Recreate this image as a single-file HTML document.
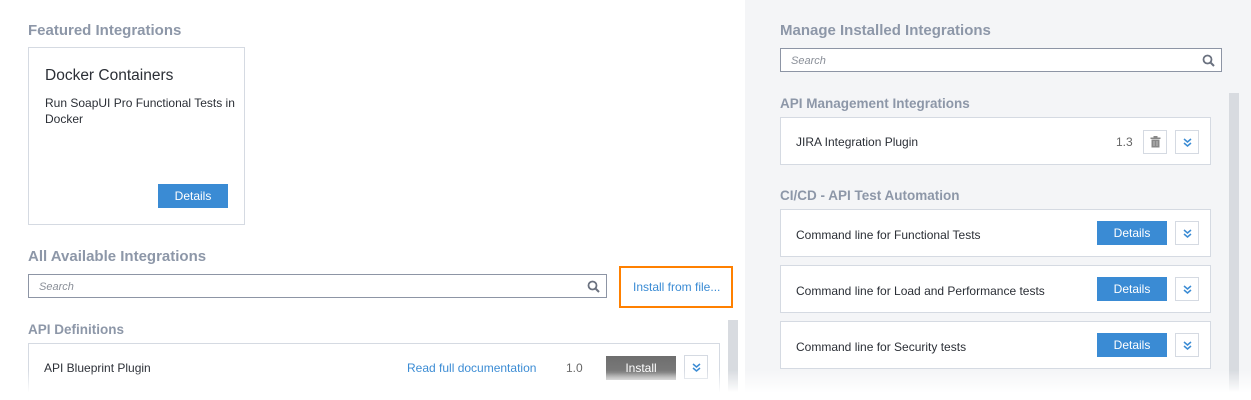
<!DOCTYPE html>
<html><head><meta charset="utf-8"><style>
*{box-sizing:border-box;margin:0;padding:0}
body{width:1251px;height:400px;overflow:hidden;background:#fff;font-family:"Liberation Sans",sans-serif;position:relative;color:#2b2f36}
.a{position:absolute}
.h{position:absolute;color:#8d97a8;font-weight:bold;white-space:nowrap}
.h1{font-size:15px}
.h2{font-size:13.5px}
.card{position:absolute;background:#fff;border:1px solid #d5dae2}
.t{position:absolute;font-size:12px;white-space:nowrap;color:#2b2f36}
.btn{position:absolute;background:#3a8bd4;color:#fff;font-size:12px;text-align:center;line-height:25px;width:70px;height:24px}
.chev{position:absolute;width:24px;height:24px;border:1px solid #d5dae2;background:#fff}
.chev svg{position:absolute;left:6px;top:6px}
.search{position:absolute;height:24px;border:1px solid #8d95a5;background:#fff}
.search span{position:absolute;left:10px;top:6px;font-size:11px;font-style:italic;color:#8a8f98}
.search svg{position:absolute;right:6px;top:5px}
</style></head><body>
<div class="a" style="left:745px;top:0;width:506px;height:400px;background:#f4f5f7"></div>

<div class="h h1" style="left:28px;top:22px">Featured Integrations</div>
<div class="card" style="left:28px;top:47px;width:217px;height:178px"></div>
<div class="t" style="left:45px;top:67px;font-size:15.5px">Docker Containers</div>
<div class="t" style="left:45px;top:95px;line-height:16px">Run SoapUI Pro Functional Tests in<br>Docker</div>
<div class="btn" style="left:158px;top:184px">Details</div>

<div class="h h1" style="left:28px;top:248px">All Available Integrations</div>
<div class="search" style="left:28px;top:274px;width:579px"><span>Search</span>
<svg width="13" height="13" viewBox="0 0 13 13"><circle cx="5.5" cy="5.5" r="4" fill="none" stroke="#6b7280" stroke-width="1.8"/><path d="M8.5 8.5L12 12" stroke="#6b7280" stroke-width="2"/></svg></div>
<div class="a" style="left:619px;top:266px;width:114px;height:42px;border:2px solid #ff8000"></div>
<div class="t" style="left:633px;top:280px;color:#3a8bd4">Install from file...</div>

<div class="h h2" style="left:28px;top:322px">API Definitions</div>
<div class="card" style="left:28px;top:343px;width:692px;height:50px"></div>
<div class="t" style="left:44px;top:361px">API Blueprint Plugin</div>
<div class="t" style="left:407px;top:361px;color:#3a8bd4">Read full documentation</div>
<div class="t" style="left:566px;top:361px;color:#666">1.0</div>
<div class="btn" style="left:606px;top:356px;background:linear-gradient(#6e6e6e,#7a7a7a 70%,#bbb)">Install</div>
<div class="chev" style="left:684px;top:355px"><svg width="11" height="11" viewBox="0 0 11 11"><path d="M2 2l3.5 3 3.5-3M2 6l3.5 3 3.5-3" fill="none" stroke="#3a8bd4" stroke-width="1.5"/></svg></div>
<div class="a" style="left:728px;top:320px;width:10px;height:80px;background:#d8dbe0"></div>

<div class="h h1" style="left:780px;top:22px">Manage Installed Integrations</div>
<div class="search" style="left:780px;top:48px;width:442px"><span>Search</span>
<svg width="13" height="13" viewBox="0 0 13 13"><circle cx="5.5" cy="5.5" r="4" fill="none" stroke="#6b7280" stroke-width="1.8"/><path d="M8.5 8.5L12 12" stroke="#6b7280" stroke-width="2"/></svg></div>
<div class="a" style="left:1229px;top:93px;width:10px;height:307px;background:#d8dbe0"></div>

<div class="h h2" style="left:780px;top:96px">API Management Integrations</div>
<div class="card" style="left:780px;top:117px;width:431px;height:48px"></div>
<div class="t" style="left:796px;top:135px">JIRA Integration Plugin</div>
<div class="t" style="left:1116px;top:135px;color:#666">1.3</div>
<div class="chev" style="left:1143px;top:130px"><svg width="11" height="12" viewBox="0 0 11 12" style="left:6px;top:5px"><rect x="3.5" y="0" width="4" height="2" fill="#888"/><rect x="0.5" y="1.5" width="10" height="1.5" fill="#888"/><rect x="1.5" y="3.5" width="8" height="8" fill="#888"/><path d="M4 5v5M7 5v5" stroke="#bbb" stroke-width="1"/></svg></div>
<div class="chev" style="left:1175px;top:130px"><svg width="11" height="11" viewBox="0 0 11 11"><path d="M2 2l3.5 3 3.5-3M2 6l3.5 3 3.5-3" fill="none" stroke="#3a8bd4" stroke-width="1.5"/></svg></div>

<div class="h h2" style="left:780px;top:188px">CI/CD - API Test Automation</div>

<div class="card" style="left:780px;top:209px;width:431px;height:48px"></div>
<div class="t" style="left:796px;top:228px">Command line for Functional Tests</div>
<div class="btn" style="left:1097px;top:221px">Details</div>
<div class="chev" style="left:1175px;top:221px"><svg width="11" height="11" viewBox="0 0 11 11"><path d="M2 2l3.5 3 3.5-3M2 6l3.5 3 3.5-3" fill="none" stroke="#3a8bd4" stroke-width="1.5"/></svg></div>

<div class="card" style="left:780px;top:265px;width:431px;height:48px"></div>
<div class="t" style="left:796px;top:284px">Command line for Load and Performance tests</div>
<div class="btn" style="left:1097px;top:277px">Details</div>
<div class="chev" style="left:1175px;top:277px"><svg width="11" height="11" viewBox="0 0 11 11"><path d="M2 2l3.5 3 3.5-3M2 6l3.5 3 3.5-3" fill="none" stroke="#3a8bd4" stroke-width="1.5"/></svg></div>

<div class="card" style="left:780px;top:321px;width:431px;height:48px"></div>
<div class="t" style="left:796px;top:340px">Command line for Security tests</div>
<div class="btn" style="left:1097px;top:333px">Details</div>
<div class="chev" style="left:1175px;top:333px"><svg width="11" height="11" viewBox="0 0 11 11"><path d="M2 2l3.5 3 3.5-3M2 6l3.5 3 3.5-3" fill="none" stroke="#3a8bd4" stroke-width="1.5"/></svg></div>

<div class="a" style="left:0;top:370px;width:1251px;height:30px;background:linear-gradient(rgba(255,255,255,0),#fff 75%)"></div>
</body></html>
